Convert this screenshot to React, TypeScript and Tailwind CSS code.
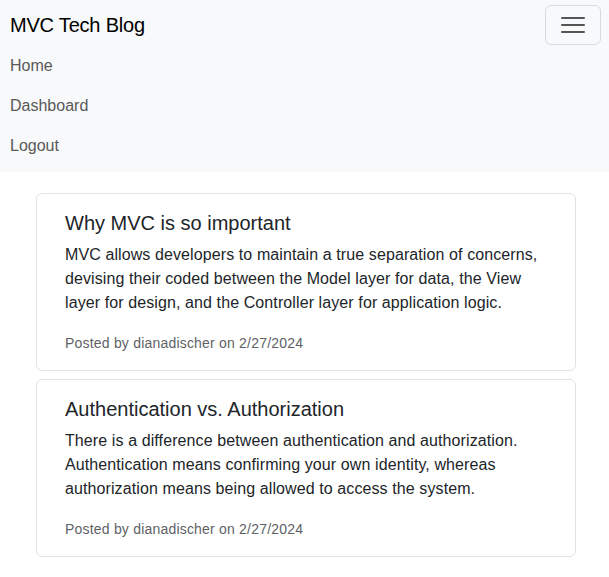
import { useState } from 'react'

interface Post {
  id: number
  title: string
  body: string
  author: string
  date: string
}

const posts: Post[] = [
  {
    id: 1,
    title: 'Why MVC is so important',
    body: 'MVC allows developers to maintain a true separation of concerns, devising their coded between the Model layer for data, the View layer for design, and the Controller layer for application logic.',
    author: 'dianadischer',
    date: '2/27/2024',
  },
  {
    id: 2,
    title: 'Authentication vs. Authorization',
    body: 'There is a difference between authentication and authorization. Authentication means confirming your own identity, whereas authorization means being allowed to access the system.',
    author: 'dianadischer',
    date: '2/27/2024',
  },
]

const links = ['Home', 'Dashboard', 'Logout']

export default function App() {
  const [open, setOpen] = useState(true)

  return (
    <div className="min-h-[577px] bg-white text-[#212529] font-['Liberation_Sans',Arial,sans-serif]">
      {/* Navbar */}
      <nav className="bg-[#f8f9fa] pt-[5px] pb-[6px]">
        <div className="flex items-center justify-between pl-[10px] pr-[8px]">
          <a href="#" className="text-[20px] leading-[40px] tracking-[-0.2px] text-black">
            MVC Tech Blog
          </a>
          <button
            onClick={() => setOpen(!open)}
            className="flex h-[40px] w-[56px] items-center justify-center rounded-[6px] border border-[rgba(0,0,0,0.12)]"
          >
            <svg width="24" height="20" viewBox="0 0 24 20">
              <path d="M1 3h22M1 10h22M1 17h22" stroke="#555" strokeWidth="2" strokeLinecap="round" />
            </svg>
          </button>
        </div>
        {open && (
          <ul className="mt-[1px] pl-[10px]">
            {links.map((l) => (
              <li key={l}>
                <a href="#" className="block text-[16px] leading-[40px] text-[#595959]">
                  {l}
                </a>
              </li>
            ))}
          </ul>
        )}
      </nav>

      {/* Posts */}
      <main className="flex flex-col gap-[8px] pl-[36px] pr-[33px] pt-[21px] pb-[20px]">
        {posts.map((post) => (
          <section
            key={post.id}
            className="rounded-[6px] border border-[#dee2e6] px-[28px] pt-[17px] pb-[16px]"
          >
            <h2 className="text-[20px] font-medium leading-[24px]">{post.title}</h2>
            <p className="mt-[8px] text-[16px] leading-[24px] tracking-[0.1px]">{post.body}</p>
            <p className="mt-[18px] text-[14px] leading-[21px] tracking-[0.2px] text-[#5e6267]">
              Posted by {post.author} on {post.date}
            </p>
          </section>
        ))}
      </main>
    </div>
  )
}
